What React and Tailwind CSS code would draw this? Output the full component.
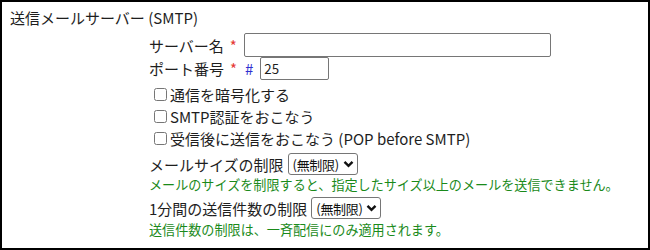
import { useState } from 'react';

const jp = "font-['Noto_Sans_CJK_JP','Noto_Sans',sans-serif]";

function LimitSelect() {
  return (
    <button
      type="button"
      className={`flex h-[22px] w-[70px] shrink-0 items-center justify-between gap-[2px] whitespace-nowrap rounded-[3px] border border-[#767676] bg-white pl-[4px] pr-[3px] text-[13px] leading-none text-[#111] ${jp}`}
    >
      <span className="whitespace-nowrap tracking-[-0.3px]">(無制限)</span>
      <svg width="11" height="8" viewBox="0 0 11 8" className="shrink-0">
        <path d="M1.5 1.8 L5.5 5.8 L9.5 1.8" fill="none" stroke="#111" strokeWidth="2.4" />
      </svg>
    </button>
  );
}

function Check({ label }) {
  const [on, setOn] = useState(false);
  return (
    <label className="flex h-[22px] items-center">
      <input
        type="checkbox"
        checked={on}
        onChange={() => setOn(!on)}
        className="ml-[5px] mr-[3px] h-[13px] w-[13px]"
      />
      <span>{label}</span>
    </label>
  );
}

export default function App() {
  const [server, setServer] = useState('');
  const [port, setPort] = useState('25');

  return (
    <div className={`h-[250px] w-[650px] border-2 border-black bg-white text-[15px] leading-none text-[#1e1e1e] ${jp}`}>
      <div className="mt-[4px] flex h-[22px] items-center pl-2">送信メールサーバー (SMTP)</div>

      <div className="ml-[147px] mt-[5px] flex flex-col">
        <div className="flex h-[24px] items-center">
          <span>サーバー名</span>
          <span className="ml-[6px] text-[#e53935]">*</span>
          <input
            value={server}
            onChange={(e) => setServer(e.target.value)}
            className="ml-[7px] h-[24px] w-[307px] rounded-[2px] border border-[#767676] px-[3px] text-[13.3px]"
          />
        </div>

        <div className="flex h-[23px] items-center">
          <span>ポート番号</span>
          <span className="ml-[6px] text-[#e53935]">*</span>
          <span className="ml-[8px] text-[#2f2fd0]">#</span>
          <input
            value={port}
            onChange={(e) => setPort(e.target.value)}
            className="ml-[7px] h-[23px] w-[69px] rounded-[2px] border border-[#767676] px-[3px] text-[13.3px]"
          />
        </div>

        <div className="mt-[3px] flex flex-col">
          <Check label="通信を暗号化する" />
          <Check label="SMTP認証をおこなう" />
          <Check label="受信後に送信をおこなう (POP before SMTP)" />
        </div>

        <div className="mt-[3px] flex h-[24px] items-center gap-[4px]">
          <span>メールサイズの制限</span>
          <LimitSelect />
        </div>
        <div className="flex h-[18px] items-center text-[13.1px] text-[#1a8a1a]">
          メールのサイズを制限すると、指定したサイズ以上のメールを送信できません。
        </div>

        <div className="mt-[2px] flex h-[24px] items-center gap-[4px]">
          <span>1分間の送信件数の制限</span>
          <LimitSelect />
        </div>
        <div className="flex h-[20px] items-center text-[13.1px] text-[#1a8a1a]">
          送信件数の制限は、一斉配信にのみ適用されます。
        </div>
      </div>
    </div>
  );
}
